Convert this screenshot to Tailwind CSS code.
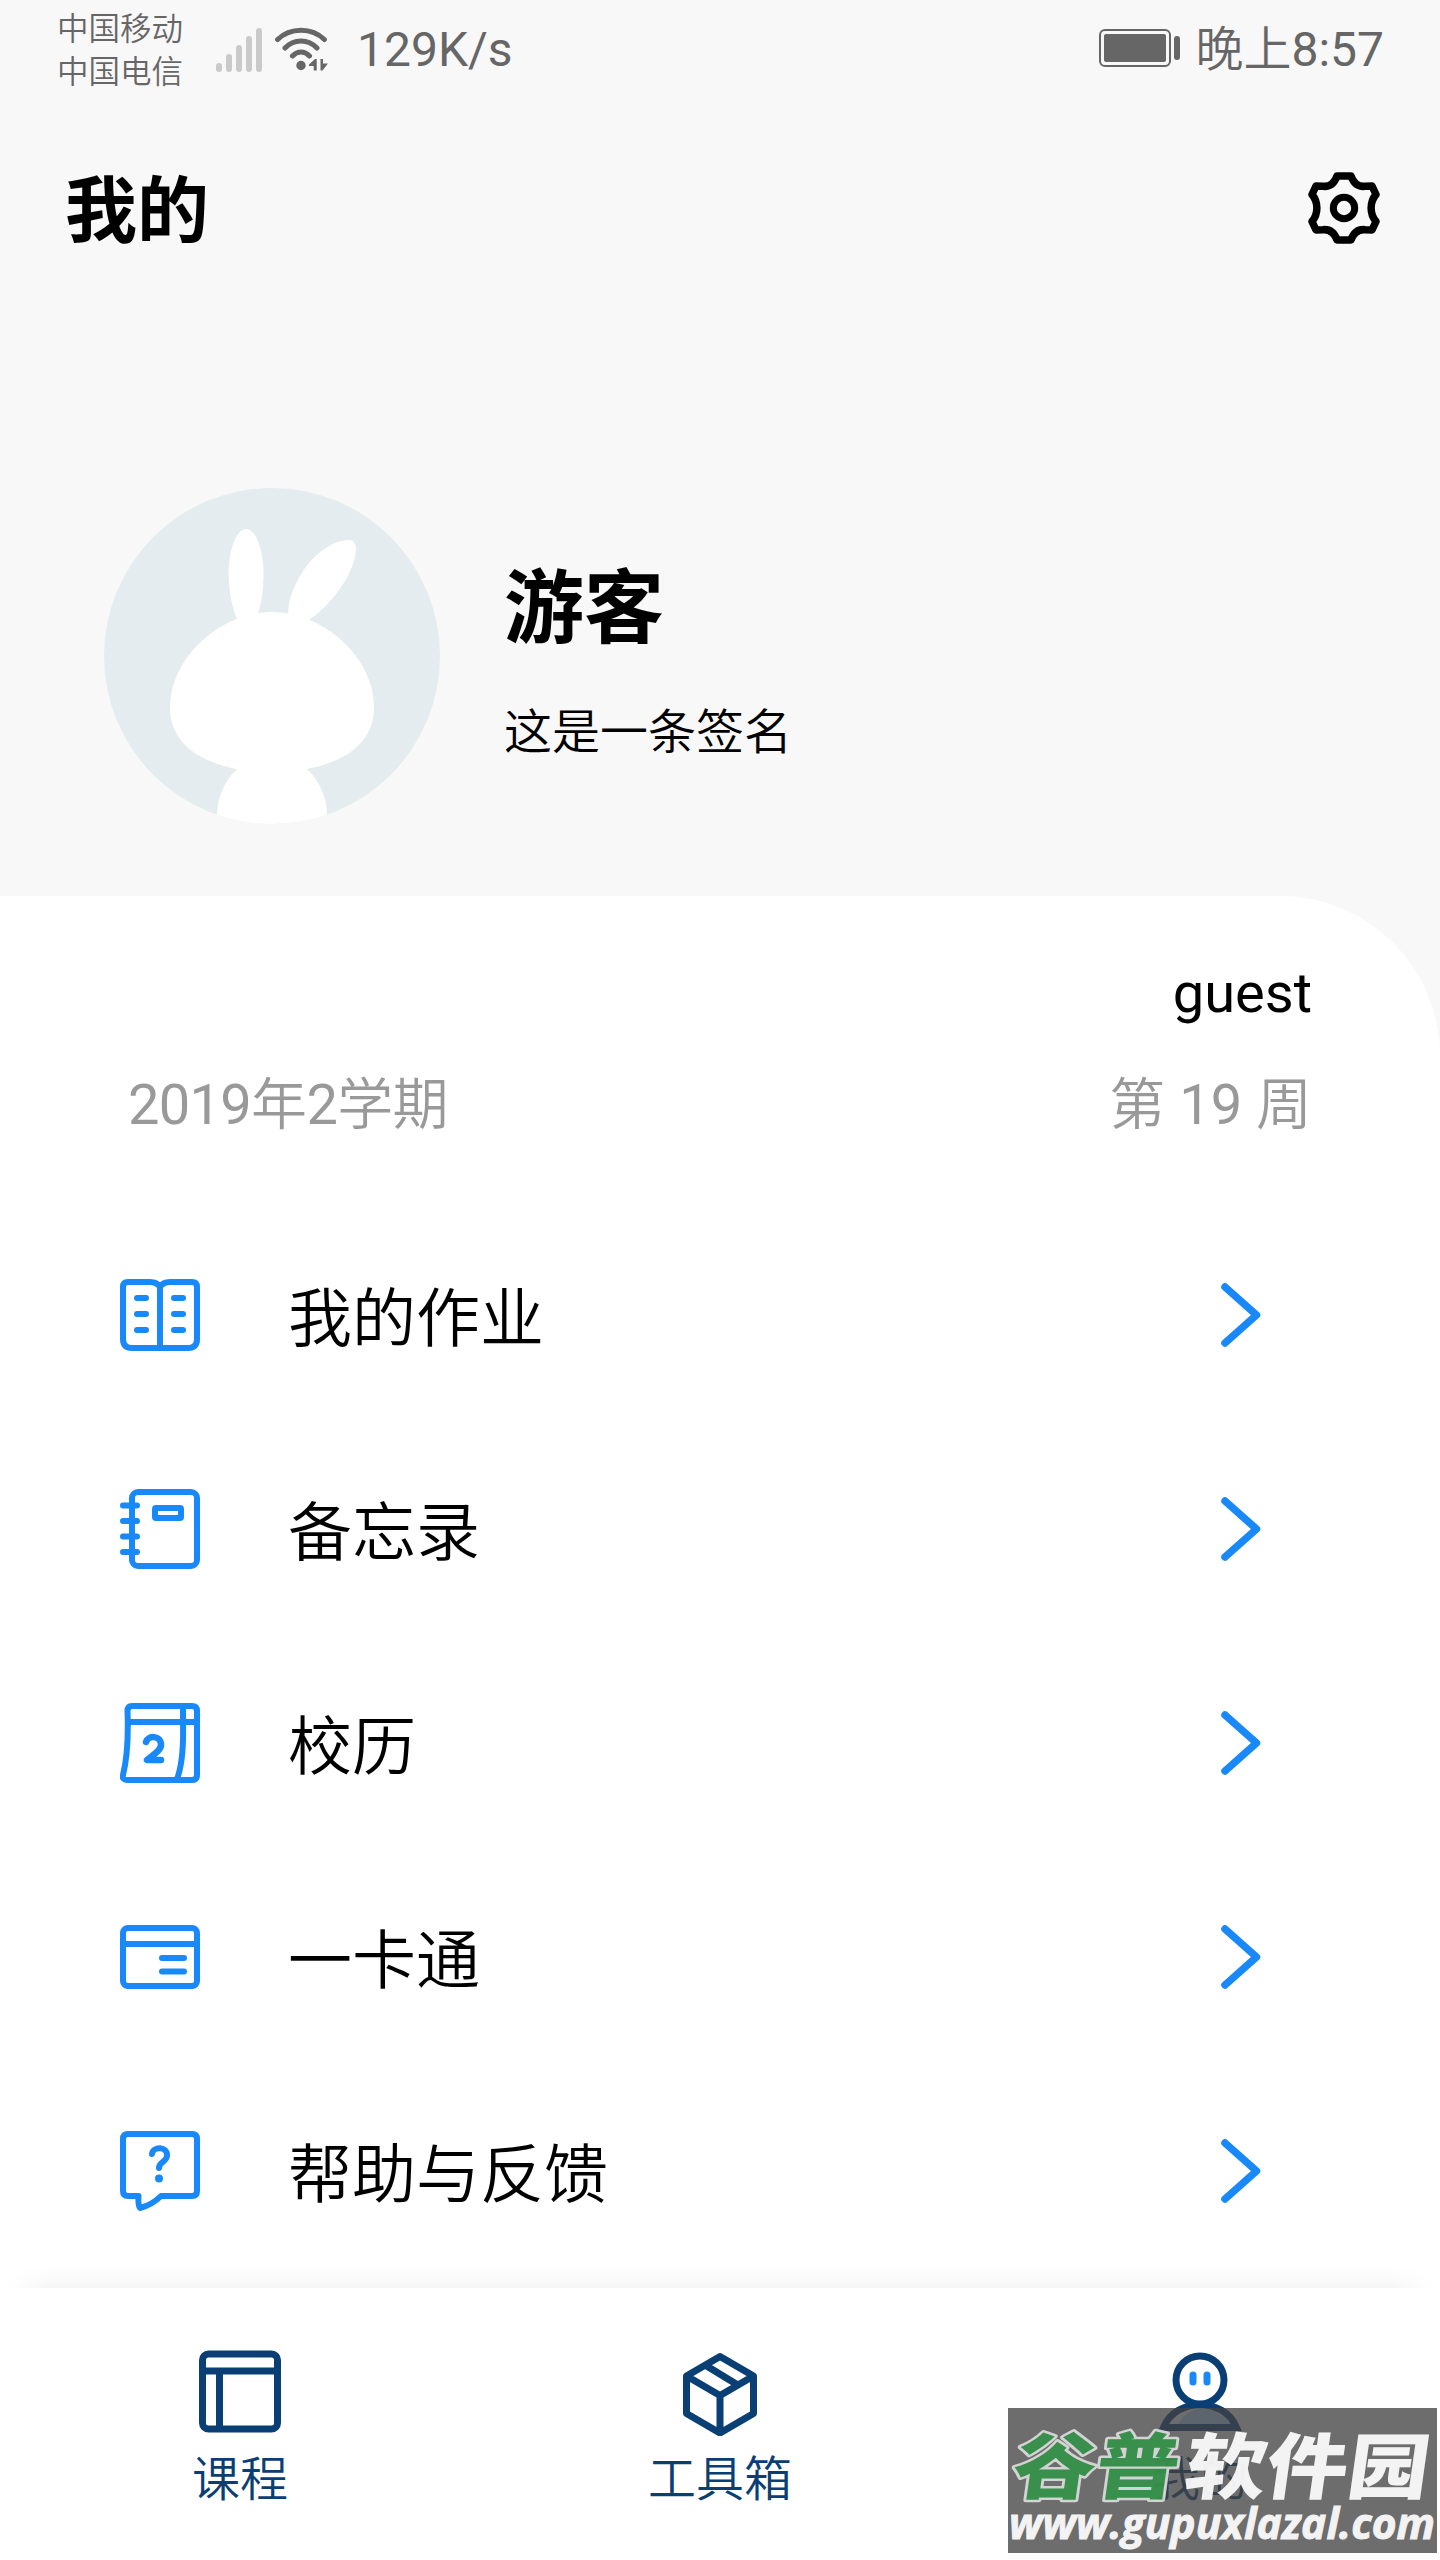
<!DOCTYPE html>
<html lang="zh-CN">
<head>
<meta charset="utf-8">
<title>我的</title>
<script src="https://cdn.jsdelivr.net/npm/@tailwindcss/browser@4"></script>
</head>
<body class="bg-[#f8f8f8]">
<div class="relative flex h-[2560px] w-[1440px] flex-col overflow-hidden bg-[#f8f8f8] font-[Roboto,'Noto_Sans_CJK_SC',sans-serif] text-black">

  <!-- status bar -->
  <header class="flex h-[100px] shrink-0 items-center justify-between pl-[57px] pr-14 text-5xl text-[#666]">
    <div class="flex items-center">
      <div class="w-[159px] pt-0.5 text-[31.5px] leading-[43px] font-[350]">
        <p>中国移动</p>
        <p>中国电信</p>
      </div>
      <div class="flex h-11 items-end gap-1">
        <i class="h-[9px] w-1.5 rounded-full bg-[#cacaca]"></i>
        <i class="h-[18px] w-1.5 rounded-full bg-[#cacaca]"></i>
        <i class="h-[27px] w-1.5 rounded-full bg-[#cacaca]"></i>
        <i class="h-9 w-1.5 rounded-full bg-[#cacaca]"></i>
        <i class="h-11 w-1.5 rounded-full bg-[#cacaca]"></i>
      </div>
      <svg class="ml-[13px] h-12 w-[54px]" viewBox="0 0 54 48" fill="none" stroke="#666" stroke-width="5" stroke-linecap="round">
        <path d="M2.6 13.500C15 1 37 1 49.4 13.500M10 22C19 12.500 33 12.500 42 22M17.500 30C22.500 24.500 29.500 24.500 34.500 30"/>
        <circle cx="26" cy="39.500" r="4.700" fill="#666" stroke="none"/>
        <path d="M40 33h1.700v11.500h-3V40H34v-1.500zM45.500 33h2.500v4.500h5L47.500 44.500h-2z" fill="#666" stroke="none"/>
      </svg>
      <span class="ml-7 leading-[56px]">129K/s</span>
    </div>
    <div class="flex items-center">
      <svg class="mr-3.5 -mt-1 h-10 w-[82px]" viewBox="0 0 82 40" fill="#666">
        <rect x="1" y="2" width="70" height="36" rx="5" fill="none" stroke="#666" stroke-width="2"/>
        <rect x="5" y="6" width="62" height="28" rx="2"/>
        <rect x="75" y="8" width="6" height="24" rx="3"/>
      </svg>
      <span class="leading-[56px]"><span class="font-[350]">晚上</span>8:57</span>
    </div>
  </header>

  <!-- page title -->
  <div class="flex h-[216px] shrink-0 items-center justify-between pl-[65px] pr-[60px]">
    <h1 class="pt-[7px] text-[72px] leading-[88px] font-bold">我的</h1>
    <svg class="size-[72px]" viewBox="0 0 72 72" fill="none" stroke="#000" stroke-width="7.500" stroke-linejoin="round">
      <path d="M29 4H43C45.500 11 50 15 57 14.300L64 14L68 22.500C61.500 30 61.500 42 68 49.500L64 58L57 57.700C50 57 45.500 61 43 68H29C26.500 61 22 57 15 57.700L8 58L4 49.500C10.500 42 10.500 30 4 22.500L8 14L15 14.300C22 15 26.500 11 29 4Z"/>
      <circle cx="36" cy="36" r="10.700" stroke-width="7"/>
    </svg>
  </div>

  <!-- profile -->
  <section class="flex h-[580px] shrink-0 items-start gap-16 pl-[104px] pt-[172px]">
    <svg class="size-[336px]" viewBox="0 0 336 336">
      <clipPath id="disc"><circle cx="168" cy="168" r="168"/></clipPath>
      <g clip-path="url(#disc)" fill="#fff">
        <rect width="336" height="336" fill="#e4ecef"/>
        <path d="M142 41C151.500 41 159.500 61 159.500 86C159.500 102 157 118 153 128L134 133C128 121 124.700 103 124.700 86C124.700 61 132.500 41 142 41Z"/>
        <path d="M245 52C253 52 253.500 62 249 76C242 96 225 118 205 132L184 127C184 112 190 96 201 80C214 62 232 52 245 52Z"/>
        <path d="M168 124C218 124 270 168 270 220C270 262 226 284 168 284C110 284 66 262 66 220C66 168 118 124 168 124Z"/>
        <path d="M113 336V328C113 300 132 268 168 268C204 268 223 300 223 328V336Z"/>
      </g>
    </svg>
    <div class="flex flex-col pt-[73px]">
      <p class="text-[80px] leading-[96px] font-bold">游客</p>
      <p class="mt-11 text-5xl leading-[64px] font-[350]">这是一条签名</p>
    </div>
  </section>

  <!-- content card -->
  <main class="flex flex-1 flex-col rounded-tr-[160px] bg-white">
    <div class="flex h-[312px] shrink-0 flex-col px-32 pt-[57px] text-[56px]">
      <p class="text-right leading-[80px]">guest</p>
      <div class="mt-8 flex justify-between leading-[80px] text-[#999]">
        <span class="tracking-[-0.7px]">2019<span class="font-[350]">年</span>2<span class="font-[350]">学期</span></span>
        <span><span class="font-[350]">第</span> 19 <span class="font-[350]">周</span></span>
      </div>
    </div>

    <ul class="flex flex-col text-[64px] font-[350]">
      <li class="flex h-[214px] items-center pl-[120px] pr-[177px]">
        <svg class="size-20" viewBox="0 0 80 80" fill="none" stroke="#1989fa" stroke-width="6" stroke-linecap="round" stroke-linejoin="round">
          <path d="M40 10V73M40 12Q37 7 30 7H8Q3 7 3 12V64Q3 73 12 73H68Q77 73 77 64V12Q77 7 72 7H50Q43 7 40 12"/>
          <path d="M17 23h9M17 39h9M17 55h9M54 23h9M54 39h9M54 55h9"/>
        </svg>
        <span class="ml-[88px] flex-1 pt-2.5 leading-[80px]">我的作业</span>
        <svg class="h-16 w-[42px]" viewBox="0 0 42 64" fill="none" stroke="#1989fa" stroke-width="7.500" stroke-linecap="round" stroke-linejoin="round"><path d="M4 4L35.500 32L4 60"/></svg>
      </li>
      <li class="flex h-[214px] items-center pl-[120px] pr-[177px]">
        <svg class="size-20" viewBox="0 0 80 80" fill="none" stroke="#1989fa" stroke-width="6" stroke-linecap="round" stroke-linejoin="round">
          <rect x="12" y="3" width="65" height="74" rx="6"/>
          <rect x="35" y="19" width="26" height="10" rx="1"/>
          <path d="M3 16.500h14M3 32h14M3 47.500h14M3 63h14"/>
        </svg>
        <span class="ml-[88px] flex-1 pt-2.5 leading-[80px]">备忘录</span>
        <svg class="h-16 w-[42px]" viewBox="0 0 42 64" fill="none" stroke="#1989fa" stroke-width="7.500" stroke-linecap="round" stroke-linejoin="round"><path d="M4 4L35.500 32L4 60"/></svg>
      </li>
      <li class="flex h-[214px] items-center pl-[120px] pr-[177px]">
        <svg class="size-20" viewBox="0 0 80 80" fill="none" stroke="#1989fa" stroke-width="6" stroke-linecap="round" stroke-linejoin="round">
          <path d="M12 3H72Q77 3 77 8V72Q77 77 72 77H7Q2 77 3 72Q9 48 7.500 8Q7.500 3 12 3ZM8 19H77M63 4V19Q64 58 57 76"/>
          <path d="M26 39C28 32 41 32 41 42C41 48 31 53 27 57H41" stroke-width="6.500"/>
        </svg>
        <span class="ml-[88px] flex-1 pt-2.5 leading-[80px]">校历</span>
        <svg class="h-16 w-[42px]" viewBox="0 0 42 64" fill="none" stroke="#1989fa" stroke-width="7.500" stroke-linecap="round" stroke-linejoin="round"><path d="M4 4L35.500 32L4 60"/></svg>
      </li>
      <li class="flex h-[214px] items-center pl-[120px] pr-[177px]">
        <svg class="size-20" viewBox="0 0 80 80" fill="none" stroke="#1989fa" stroke-width="6" stroke-linecap="round" stroke-linejoin="round">
          <rect x="3" y="11" width="74" height="58" rx="5"/>
          <path d="M3 27H77M42 41H64M42 54.500H64"/>
        </svg>
        <span class="ml-[88px] flex-1 pt-2.5 leading-[80px]">一卡通</span>
        <svg class="h-16 w-[42px]" viewBox="0 0 42 64" fill="none" stroke="#1989fa" stroke-width="7.500" stroke-linecap="round" stroke-linejoin="round"><path d="M4 4L35.500 32L4 60"/></svg>
      </li>
      <li class="flex h-[214px] items-center pl-[120px] pr-[177px]">
        <svg class="size-20" viewBox="0 0 80 80" fill="none" stroke="#1989fa" stroke-width="6" stroke-linecap="round" stroke-linejoin="round">
          <path d="M8 3H72Q77 3 77 8V60Q77 65 72 65H41Q32 74 20 77Q18 75 18.500 65H8Q3 65 3 60V8Q3 3 8 3Z"/>
          <path d="M32 23C33 15 48 15 47 25C46.500 31 39 31 39 37"/>
          <circle cx="39" cy="47.500" r="4" fill="#1989fa" stroke="none"/>
        </svg>
        <span class="ml-[88px] flex-1 pt-2.5 leading-[80px]">帮助与反馈</span>
        <svg class="h-16 w-[42px]" viewBox="0 0 42 64" fill="none" stroke="#1989fa" stroke-width="7.500" stroke-linecap="round" stroke-linejoin="round"><path d="M4 4L35.500 32L4 60"/></svg>
      </li>
    </ul>
  </main>

  <!-- tab bar -->
  <nav class="absolute inset-x-0 bottom-0 grid h-[272px] grid-cols-3 bg-white text-5xl font-[350] text-[#0a3f75] shadow-[0_-18px_32px_-28px_rgba(0,0,0,0.15)]">
    <a class="flex flex-col items-center pt-[60px]">
      <svg class="size-[88px]" viewBox="0 0 88 88" fill="none" stroke="#0a3f75" stroke-width="7">
        <rect x="6.500" y="6" width="75" height="75" rx="6"/>
        <path d="M6 23H82M23.500 23V81"/>
      </svg>
      <span class="mt-3.5 leading-[60px]">课程</span>
    </a>
    <a class="flex flex-col items-center pt-[60px]">
      <svg class="size-[88px]" viewBox="0 0 88 88" fill="none" stroke="#0a3f75" stroke-width="7" stroke-linejoin="round">
        <path d="M44 8.500L77.500 28V65.500L44 85L10.500 65.500V28ZM10.500 28L44 47.500L77.500 28M44 47.500V85M29 17L61 36.500"/>
      </svg>
      <span class="mt-3.5 leading-[60px]">工具箱</span>
    </a>
    <a class="flex flex-col items-center pt-[60px]">
      <svg class="size-[88px]" viewBox="0 0 88 88" fill="none" stroke="#0a3f75" stroke-width="7">
        <path d="M22 77C28 64 42 58 54 62C64 65 72 72 77 77Z" fill="#b4d8ff" stroke="none"/>
        <path d="M7.500 79.500C20 49 68 49 80.500 79.500Z"/>
        <circle cx="44" cy="32" r="24" fill="#fff"/>
        <path d="M37 27V34M51 27V34" stroke="#1989fa" stroke-linecap="round"/>
      </svg>
      <span class="mt-3.5 leading-[60px]">我的</span>
    </a>
  </nav>

  <!-- watermark -->
  <div class="absolute right-[3px] bottom-[7px] h-[145px] w-[429px] bg-[#414141]/77">
    <svg class="size-full overflow-visible" viewBox="0 0 429 145" fill="#fff" opacity="0.92">
      <g font-family="'Noto Sans CJK SC',sans-serif" font-weight="900" font-size="72" transform="translate(0 85) skewX(-8)">
        <text x="2" y="0" textLength="166" lengthAdjust="spacingAndGlyphs" fill="#35924a" stroke="#dcdcdc" stroke-width="5" stroke-linejoin="round" paint-order="stroke">谷普</text>
        <text x="174" y="0" textLength="244" lengthAdjust="spacingAndGlyphs">软件园</text>
      </g>
      <text x="1" y="131" textLength="426" lengthAdjust="spacingAndGlyphs" font-family="'Open Sans','Noto Sans',sans-serif" font-weight="700" font-style="italic" font-size="43" stroke="#fff" stroke-width="1">www.gupuxlazal.com</text>
    </svg>
  </div>
</div>
</body>
</html>
